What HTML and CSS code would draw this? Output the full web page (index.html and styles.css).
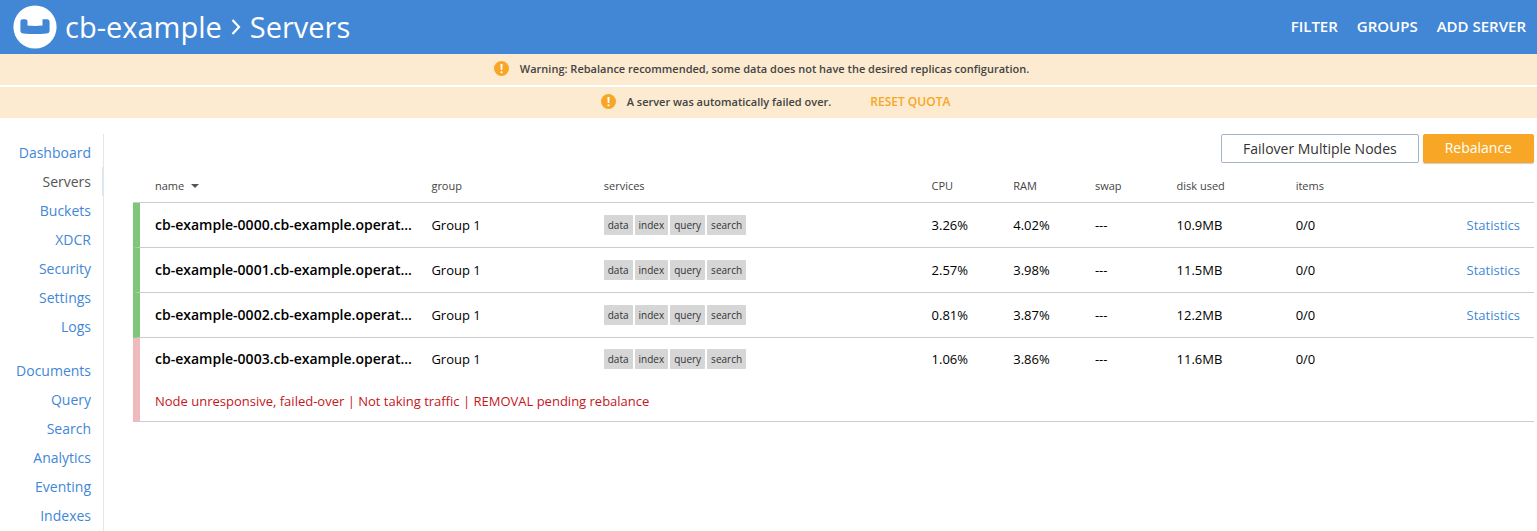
FILE: index.html
```html
<!DOCTYPE html>
<html lang="en">
<head>
<meta charset="utf-8">
<title>cb-example - Servers</title>
<link rel="stylesheet" href="styles.css">
</head>
<body>
<header class="header">
  <svg class="logo" viewBox="0 0 44 44" aria-hidden="true">
    <circle cx="22" cy="22" r="21.6" fill="#fff"/>
    <path d="M9.500 14.300H12Q14.500 14.300 14.500 16V20.500Q22 21.300 29.500 20.500V14.300H34Q36.600 14.300 36.600 17V25.500Q36.600 28.300 33.500 28.600Q22 29.600 10.500 28.600Q7.400 28.300 7.400 25.500V17Q7.400 14.300 9.500 14.300Z" fill="#4287d6"/>
  </svg>
  <h1 class="title">
    <span>cb-example</span>
    <svg class="chevron" viewBox="0 0 10 18" aria-hidden="true"><path d="M1.500 2L8 9L1.500 16" fill="none" stroke="#fff" stroke-width="2.200"/></svg>
    <span>Servers</span>
  </h1>
  <nav class="actions">
    <a href="#filter">FILTER</a>
    <a href="#groups">GROUPS</a>
    <a href="#add">ADD SERVER</a>
  </nav>
</header>
<div class="alerts">
  <div class="alert">
    <svg class="warn" viewBox="0 0 14 14" aria-hidden="true"><circle cx="7" cy="7" r="7" fill="#f7a725"/><path d="M6 2.800H8L7.700 8.500H6.300Z" fill="#fff"/><circle cx="7" cy="10.500" r="1" fill="#fff"/></svg>
    <span>Warning: Rebalance recommended, some data does not have the desired replicas configuration.</span>
  </div>
  <div class="alert with-action">
    <svg class="warn" viewBox="0 0 14 14" aria-hidden="true"><circle cx="7" cy="7" r="7" fill="#f7a725"/><path d="M6 2.800H8L7.700 8.500H6.300Z" fill="#fff"/><circle cx="7" cy="10.500" r="1" fill="#fff"/></svg>
    <span>A server was automatically failed over.</span>
    <a class="reset" href="#reset">RESET QUOTA</a>
  </div>
</div>
<div class="page">
  <nav class="sidebar">
    <a href="#dashboard">Dashboard</a>
    <a class="current" href="#servers">Servers</a>
    <a href="#buckets">Buckets</a>
    <a href="#xdcr">XDCR</a>
    <a href="#security">Security</a>
    <a href="#settings">Settings</a>
    <a href="#logs">Logs</a>
    <a class="second" href="#documents">Documents</a>
    <a href="#query">Query</a>
    <a href="#search">Search</a>
    <a href="#analytics">Analytics</a>
    <a href="#eventing">Eventing</a>
    <a href="#indexes">Indexes</a>
  </nav>
  <main class="main">
    <div class="buttons">
      <button class="btn" type="button">Failover Multiple Nodes</button>
      <button class="btn primary" type="button">Rebalance</button>
    </div>
    <table class="servers">
      <colgroup><col class="c-name"><col class="c-group"><col class="c-services"><col class="c-stat"><col class="c-stat"><col class="c-stat"><col class="c-disk"><col class="c-items"><col></colgroup>
      <thead>
        <tr><th>name <svg class="caret" viewBox="0 0 8 4" aria-hidden="true"><path d="M0 0H8L4 4Z" fill="#555"/></svg></th><th>group</th><th>services</th><th>CPU</th><th>RAM</th><th>swap</th><th>disk used</th><th>items</th><th></th></tr>
      </thead>
      <tbody class="healthy">
        <tr><td class="name">cb-example-0000.cb-example.operat...</td><td>Group 1</td><td><div class="tags"><span>data</span><span>index</span><span>query</span><span>search</span></div></td><td>3.26%</td><td>4.02%</td><td>---</td><td>10.9MB</td><td>0/0</td><td class="link"><a href="#s0">Statistics</a></td></tr>
        <tr><td class="name">cb-example-0001.cb-example.operat...</td><td>Group 1</td><td><div class="tags"><span>data</span><span>index</span><span>query</span><span>search</span></div></td><td>2.57%</td><td>3.98%</td><td>---</td><td>11.5MB</td><td>0/0</td><td class="link"><a href="#s1">Statistics</a></td></tr>
        <tr><td class="name">cb-example-0002.cb-example.operat...</td><td>Group 1</td><td><div class="tags"><span>data</span><span>index</span><span>query</span><span>search</span></div></td><td>0.81%</td><td>3.87%</td><td>---</td><td>12.2MB</td><td>0/0</td><td class="link"><a href="#s2">Statistics</a></td></tr>
      </tbody>
      <tbody class="failed">
        <tr><td class="name">cb-example-0003.cb-example.operat...</td><td>Group 1</td><td><div class="tags"><span>data</span><span>index</span><span>query</span><span>search</span></div></td><td>1.06%</td><td>3.86%</td><td>---</td><td>11.6MB</td><td>0/0</td><td></td></tr>
        <tr class="message"><td colspan="9">Node unresponsive, failed-over | Not taking traffic | REMOVAL pending rebalance</td></tr>
      </tbody>
    </table>
  </main>
</div>
</body>
</html>
```
FILE: styles.css
```css
* { box-sizing: border-box; }
html, body { height: 100%; }
body {
  margin: 0;
  display: flex;
  flex-direction: column;
  overflow: hidden;
  background: #fff;
  color: #000;
  font-family: "Open Sans", "Noto Sans", sans-serif;
  font-size: 13px;
}
a { color: #4287d6; text-decoration: none; }

.header {
  display: flex;
  align-items: center;
  flex-shrink: 0;
  height: 54px;
  padding: 0 11px 0 13px;
  background: #4287d6;
  color: #fff;
}
.logo { width: 44px; height: 44px; }
.title {
  display: flex;
  align-items: center;
  gap: 9px;
  margin: 0 auto 0 8px;
  font-size: 29px;
  font-weight: 400;
  line-height: 40px;
}
.chevron { width: 10px; height: 18px; }
.actions { display: flex; gap: 19px; padding-bottom: 2px; }
.actions a { color: #fff; font-size: 15px; font-weight: 600; }

.alerts { display: grid; gap: 2px; flex-shrink: 0; }
.alert {
  display: flex;
  align-items: center;
  justify-content: center;
  height: 31px;
  padding: 0 14px 2px 0;
  background: #fcebd0;
  color: #444;
  font-size: 11px;
  font-weight: 600;
}
.with-action { padding: 0 0 2px 14px; }
.warn { width: 15px; height: 15px; margin-right: 11px; }
.reset { margin-left: 39px; color: #f7a725; font-size: 12px; font-weight: 600; }

.page { display: flex; flex: 1; min-height: 0; padding-top: 16px; }
.sidebar {
  display: flex;
  flex-direction: column;
  flex: 0 0 104px;
  padding-top: 4px;
  border-right: 1px solid #e6e6e6;
  text-align: right;
}
.sidebar a {
  flex-shrink: 0;
  padding-right: 12px;
  font-size: 14px;
  line-height: 29px;
}
.sidebar .current { padding-right: 11px; border-right: 1px solid #d6e5f7; color: #555; }
.sidebar .second { margin-top: 15px; }

.main { flex: 1; min-width: 0; padding: 0 3px 0 29px; }
.buttons { display: flex; justify-content: flex-end; gap: 4px; }
.btn {
  height: 29px;
  padding: 0 21px;
  border: 1px solid #a6b4c8;
  border-radius: 2px;
  background: #fff;
  color: #333;
  font-family: inherit;
  font-size: 14px;
}
.primary {
  padding-bottom: 2px;
  border-color: #f7a725;
  background: #f7a725;
  color: #fff;
  box-shadow: 0 1px 1px #ccc;
}

.servers {
  width: 100%;
  margin-top: 6px;
  table-layout: fixed;
  border-spacing: 0;
}
.c-name { width: 21.3%; }
.c-group { width: 12.3%; }
.c-services { width: 23.4%; }
.c-stat { width: 5.83%; }
.c-disk { width: 8.5%; }
.c-items { width: 8%; }
th, td {
  padding: 0;
  border-bottom: 1px solid #ccc;
  text-align: left;
  white-space: nowrap;
}
th {
  height: 34px;
  color: #444;
  font-size: 11px;
  font-weight: 400;
}
th:first-child { padding-left: 22px; }
.caret { width: 8px; height: 4px; margin-left: 4px; vertical-align: 2px; }
td { height: 45px; }
td:first-child { padding-left: 15px; border-left: 7px solid #80c67a; }
.failed td:first-child { border-left-color: #f0babd; }
.failed tr:first-child td { height: 42px; border-bottom: 0; }
.name { padding-bottom: 1px; font-size: 14px; font-weight: 600; }
.link { padding-right: 14px; text-align: right; }
.message td { height: 42px; color: #c4161c; }
.tags { display: flex; gap: 2px; }
.tags span {
  padding: 0 4px;
  border-radius: 1px;
  background: #d6d6d6;
  color: #333;
  font-size: 10px;
  line-height: 20px;
}
```
